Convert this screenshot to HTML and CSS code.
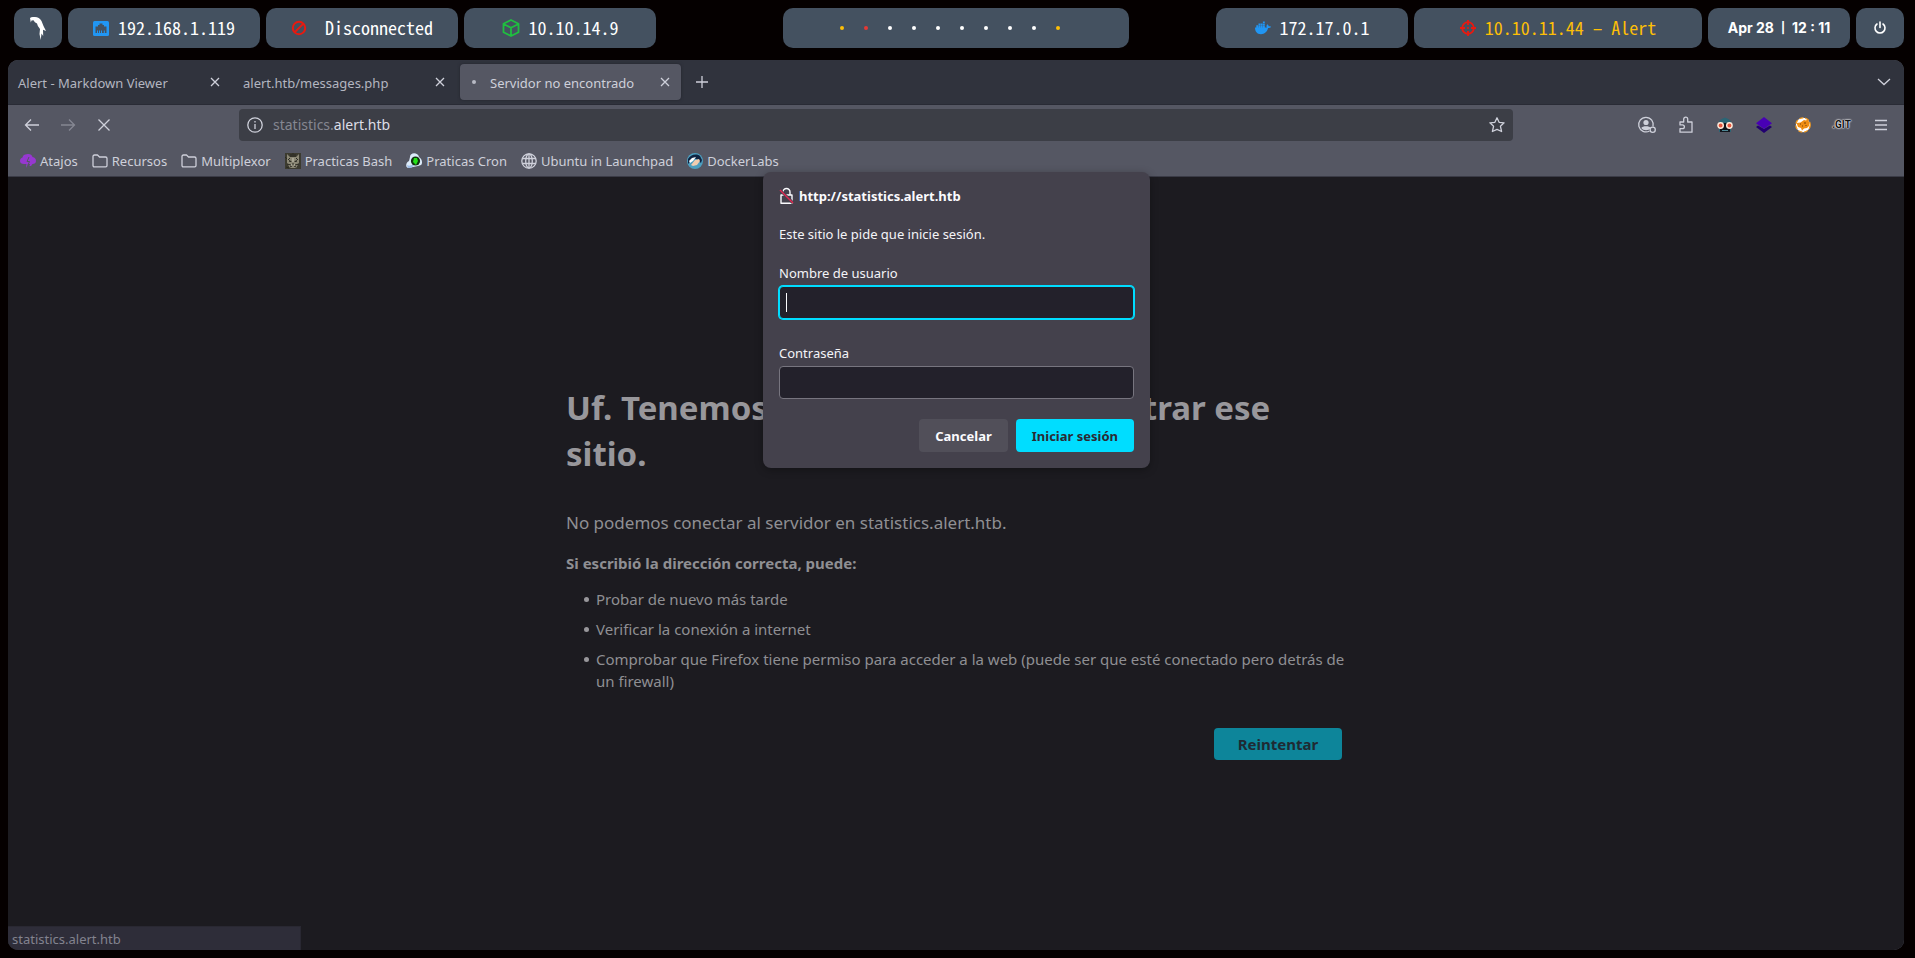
FILE: index.html
```html
<!DOCTYPE html>
<html lang="es">
<head>
<meta charset="utf-8">
<title>Servidor no encontrado</title>
<link rel="stylesheet" href="styles.css">
</head>
<body>
<header class="bar">
  <div class="bar-group bar-left">
    <button class="pill pill-icon" aria-label="Menú">
      <svg width="16" height="24" viewBox="0 0 16 24"><path fill="#fff" d="M0 2Q1.500 .500 4 1 9 .500 11.500 5L13.500 10 16 15 13 13.800 13.200 20 11.500 17.500 10.700 24 9.500 18 10 13Q7.500 10.500 7 7.500 4.500 6.500 3.500 4.200L1.500 4.500.800 6.500z"/></svg>
    </button>
    <div class="pill pill-net">
      <svg width="16" height="16" viewBox="0 0 16 16"><rect y="1" width="16" height="15" rx="1.500" fill="#2196f3"/><path fill="#445160" d="M2.500 13V6.500h2.500V5h1.500V3.500h3V5H11v1.500h2.500V13h-1.700v-2.500h-1V13H9v-2.500H8V13H7v-2.500H6V13H5v-2.500H4V13z"/></svg>
      <span>192.168.1.119</span>
    </div>
    <div class="pill pill-net pill-wide-gap">
      <svg width="16" height="16" viewBox="0 0 16 16"><g fill="none" stroke="#e9190f" stroke-width="2"><circle cx="8" cy="8" r="6.200"/><path d="M12.400 3.600l-8.800 8.800"/></g></svg>
      <span>Disconnected</span>
    </div>
    <div class="pill pill-net">
      <svg width="18" height="18" viewBox="0 0 18 18"><path fill="none" stroke="#1fbf3f" stroke-width="1.800" stroke-linejoin="round" d="M9 1l7.500 3.800v8.400L9 17l-7.500-3.800V4.800zM1.500 5L9 8.800 16.500 5M9 8.800V17"/></svg>
      <span>10.10.14.9</span>
    </div>
  </div>
  <div class="pill workspaces">
    <i class="dot yellow"></i><i class="dot red"></i><i class="dot"></i><i class="dot"></i><i class="dot"></i><i class="dot"></i><i class="dot"></i><i class="dot"></i><i class="dot"></i><i class="dot yellow"></i>
  </div>
  <div class="bar-group bar-right">
    <div class="pill pill-net">
      <svg width="16" height="16" viewBox="0 0 16 16"><path fill="#2196f3" d="M0 7.500h12c-.700-.500-.600-1.700-.200-2.500l.600-.700c.900.600 1.200 1.300 1.300 2 .700-.100 1.600 0 2.300.400-.500 1-1.700 1.300-2.900 1.300C12 12 9.500 14.200 6 14.200 2 14.200 0 11.500 0 7.500z"/><path fill="#2196f3" d="M1.300 5.300h1.900V8H1.300zM3.500 5.300h1.900V8H3.500zM5.700 5.300h1.900V8H5.700zM7.900 5.300h1.900V8H7.900zM3.500 3.400h1.900V5H3.500zM5.700 3.400h1.900V5H5.700zM7.900 3.400h1.900V5H7.900zM7.900 1.500h1.900v1.600H7.900z"/></svg>
      <span>172.17.0.1</span>
    </div>
    <div class="pill pill-target">
      <svg width="16" height="16" viewBox="0 0 16 16"><g fill="none" stroke="#e9190f" stroke-width="1.800"><circle cx="8" cy="8" r="5.800"/><path d="M8 0v5M8 11v5M0 8h5M11 8h5"/></g><circle cx="8" cy="8" r="1" fill="#e9190f"/></svg>
      <span>10.10.11.44 – Alert</span>
    </div>
    <div class="pill pill-clock"><span>Apr 28</span><span class="sep">|</span><span>12 : 11</span></div>
    <button class="pill pill-icon" aria-label="Apagar">
      <svg width="14" height="14" viewBox="0 0 14 14"><path fill="none" stroke="#fff" stroke-width="1.600" stroke-linecap="round" d="M7 1v5.500M4 3a5 5 0 1 0 6 0"/></svg>
    </button>
  </div>
</header>

<div class="window">
  <nav class="tabs" aria-label="Pestañas">
    <div class="tab"><span class="tab-title">Alert - Markdown Viewer</span><button class="icon-btn" aria-label="Cerrar"><svg width="10" height="10" viewBox="0 0 10 10"><path d="M1 1l8 8M9 1l-8 8"/></svg></button></div>
    <div class="tab"><span class="tab-title">alert.htb/messages.php</span><button class="icon-btn" aria-label="Cerrar"><svg width="10" height="10" viewBox="0 0 10 10"><path d="M1 1l8 8M9 1l-8 8"/></svg></button></div>
    <div class="tab active"><i class="busy"></i><span class="tab-title">Servidor no encontrado</span><button class="icon-btn" aria-label="Cerrar"><svg width="10" height="10" viewBox="0 0 10 10"><path d="M1 1l8 8M9 1l-8 8"/></svg></button></div>
    <button class="icon-btn new-tab" aria-label="Nueva pestaña"><svg width="14" height="14" viewBox="0 0 14 14"><path d="M7 1v12M1 7h12"/></svg></button>
    <button class="icon-btn all-tabs" aria-label="Listar pestañas"><svg width="14" height="8" viewBox="0 0 14 8"><path d="M1 1l6 5.500L13 1"/></svg></button>
  </nav>

  <div class="toolbar">
    <div class="nav-buttons">
      <button class="icon-btn" aria-label="Atrás"><svg width="16" height="16" viewBox="0 0 16 16"><path d="M15 8H1.500M7 2.500L1.500 8 7 13.500"/></svg></button>
      <button class="icon-btn dim" aria-label="Adelante" disabled><svg width="16" height="16" viewBox="0 0 16 16"><path d="M1 8h13.500M9 2.500L14.500 8 9 13.500"/></svg></button>
      <button class="icon-btn" aria-label="Detener"><svg width="16" height="16" viewBox="0 0 16 16"><path d="M2.500 2.500l11 11M13.500 2.500l-11 11"/></svg></button>
    </div>
    <div class="urlbar">
      <svg width="16" height="16" viewBox="0 0 16 16"><circle cx="8" cy="8" r="7.200"/><path d="M8 7v5M8 4v1.500"/></svg>
      <span class="url"><span class="sub">statistics.</span>alert.htb</span>
      <button class="icon-btn" aria-label="Añadir marcador"><svg width="16" height="16" viewBox="0 0 16 16"><path stroke-linejoin="round" d="M8 .800l2.100 4.500 5 .500-3.700 3.400 1.200 5.300L8 12.300l-4.600 2.200 1.200-5.300L.900 5.800l5-.500z"/></svg></button>
    </div>
    <div class="extensions">
      <button class="icon-btn" aria-label="Cuenta"><svg width="20" height="18" viewBox="0 0 20 18"><path d="M12.500 15A7.300 7.300 0 1 1 16 10.500"/><circle cx="9" cy="6.500" r="2.600" fill="#ced0da" stroke="none"/><path fill="#ced0da" stroke="none" d="M4.300 12c1-2.300 8.400-2.300 9.400 0-2 3-7.400 3-9.400 0z"/><circle cx="15.700" cy="13.700" r="2.600"/></svg></button>
      <button class="icon-btn" aria-label="Extensiones"><svg width="16" height="18" viewBox="0 0 16 18"><path stroke-linejoin="round" d="M2 6h3.700V3.200a2 2 0 0 1 4 0V6H14v10.200H2v-3.500h2.500a1.900 1.900 0 0 0 0-3.800H2z"/></svg></button>
      <button class="icon-btn" aria-label="Wappalyzer"><svg width="16" height="16" viewBox="0 0 16 16"><path fill="#2b6575" stroke="none" d="M1.500 7C1.500 3 5 1.500 8 .500c3 1 6.500 2.500 6.500 6.500z"/><path fill="#2b6575" stroke="none" d="M2 10h12v5H2z"/><path fill="#12161d" stroke="none" d="M5 6h6v4l2 2v3H3v-3l2-2z"/><path fill="#4d8795" stroke="none" d="M5 13h6v1H5z"/><g fill="#e5573f" stroke="#ffe9d8" stroke-width="1.400"><circle cx="3.600" cy="8.500" r="2.700"/><circle cx="12.400" cy="8.500" r="2.700"/></g></svg></button>
      <button class="icon-btn" aria-label="Capas"><svg width="16" height="16" viewBox="0 0 16 16"><path fill="#220070" stroke="none" d="M0 10l2-1.500L8 12l6-3.500L16 10l-8 6z"/><path fill="#4800b5" stroke="none" d="M8 0l8 6.200L8 12 0 6.200z"/></svg></button>
      <button class="icon-btn" aria-label="Cookies"><svg width="16" height="16" viewBox="0 0 16 16"><circle cx="8" cy="8" r="7.200" fill="#fff" stroke="#f39a1e" stroke-width="1.300" stroke-dasharray="4 2"/><path fill="#ef8e14" stroke="none" d="M1.500 6l4-.500L9 3l2 .500L13 2l1 3v4l-2 2-3 .500-2 2-1-2.500-3-1z"/><path stroke="#7a4307" stroke-width="1" d="M5 7h1M9 6h2M7 9h1M11 8v1"/></svg></button>
      <button class="icon-btn git" aria-label="DotGit">.GIT</button>
      <button class="icon-btn" aria-label="Menú de la aplicación"><svg width="14" height="14" viewBox="0 0 14 14"><path d="M1 2.500h12M1 7h12M1 11.500h12"/></svg></button>
    </div>
  </div>

  <nav class="bookmarks" aria-label="Marcadores">
    <a href="#"><svg width="16" height="16" viewBox="0 0 16 16"><path fill="#9638d0" stroke="none" d="M0 8c0-2 1-3 2.500-3.500C3 2 5 1 7 1.200c3-.400 5 .800 5.500 2.800C15 4.500 16 6 16 8c0 2-1.500 3-3.500 3L11 13H9.500l.500-2H8l-2 4 .500-4H4C1.500 11 0 10 0 8z"/><path stroke="#555763" stroke-width="1" d="M9 4L7 8.500h2.500L8 12"/></svg>Atajos</a>
    <a href="#"><svg width="16" height="16" viewBox="0 0 16 16"><path stroke-linejoin="round" d="M1 12.500v-9c0-1 .500-1.500 1.500-1.500h3L7.500 4h6c1 0 1.500.500 1.500 1.500v7c0 .800-.500 1.300-1.300 1.300H2.300C1.500 13.800 1 13.300 1 12.500z"/></svg>Recursos</a>
    <a href="#"><svg width="16" height="16" viewBox="0 0 16 16"><path stroke-linejoin="round" d="M1 12.500v-9c0-1 .500-1.500 1.500-1.500h3L7.500 4h6c1 0 1.500.500 1.500 1.500v7c0 .800-.500 1.300-1.300 1.300H2.300C1.500 13.800 1 13.300 1 12.500z"/></svg>Multiplexor</a>
    <a href="#"><svg width="16" height="16" viewBox="0 0 16 16"><path fill="#3c3b30" stroke="none" d="M0 0h16v16H0z"/><path fill="#8a8775" stroke="none" d="M2 1l3 3h6l3-3v9l-3 5H5l-3-5z"/><path stroke="#2b2a22" stroke-width="1" d="M6 1v3M8 0v4M10 1v3M2 11l4 1M10 12l4-1M0 4l2 2M1 14l3 1M3 7l2-2M13 7l-2-2M5 14l2-1M11 14l-2-1"/><path fill="#171711" stroke="none" d="M4 7l3 1.500-2.500.500zM12 7L9 8.500l2.500.500zM7 10.500h2L8 12z"/><path stroke="#c6c4b4" stroke-width="1" d="M6 12h1M9 12h1M8 5v4"/></svg>Practicas Bash</a>
    <a href="#"><svg width="16" height="16" viewBox="0 0 16 16"><path fill="#dcebfa" stroke="none" d="M4 4c0-5 8-5 9 0 3 2 4 6 2 8l-3 1-5 1-5 1c-3-1-2-6 1-7z"/><path fill="#9dbde8" stroke="none" d="M1 12c3 2 5-1 7 0l-2 2.500-4 .500z"/><circle cx="9.500" cy="8" r="4.600" fill="#12330f" stroke="none"/><path fill="#24e018" stroke="none" d="M8 5h3l1 3-2 4-3-3z"/></svg>Praticas Cron</a>
    <a href="#"><svg width="16" height="16" viewBox="0 0 16 16"><circle cx="8" cy="8" r="7.200"/><ellipse cx="8" cy="8" rx="3.300" ry="7.200"/><path d="M1.500 5.500h13M1.500 10.500h13M8 1v14"/></svg>Ubuntu in Launchpad</a>
    <a href="#"><svg width="16" height="16" viewBox="0 0 16 16"><circle cx="8" cy="8" r="8" fill="#4c9fc0" stroke="none"/><path fill="#0f2442" stroke="none" d="M1 6c2-4 8-6 12-3l2 4-1 3-3-3-4-2-4 4-2 2z"/><path fill="#f1cdb0" stroke="none" d="M4 12l4-5 4-1 1 2-3 4-4 1z"/><path fill="#fff" stroke="none" d="M2 8l3-3 4-1-3 4-3 2z"/></svg>DockerLabs</a>
  </nav>

  <main class="content">
    <section class="error">
      <h1>Uf. Tenemos problemas para encontrar ese sitio.</h1>
      <p class="lead">No podemos conectar al servidor en statistics.alert.htb.</p>
      <p class="hint">Si escribió la dirección correcta, puede:</p>
      <ul>
        <li>Probar de nuevo más tarde</li>
        <li>Verificar la conexión a internet</li>
        <li>Comprobar que Firefox tiene permiso para acceder a la web (puede ser que esté conectado pero detrás de un firewall)</li>
      </ul>
      <button class="retry">Reintentar</button>
    </section>
    <div class="status">statistics.alert.htb</div>
  </main>

  <form class="auth" role="dialog" aria-labelledby="auth-title">
    <h2 id="auth-title"><svg width="16" height="18" viewBox="0 0 16 18"><path fill="none" stroke="#fbfbfe" stroke-width="1.400" stroke-linejoin="round" d="M2 8h11v8.300H2zM4 8V5a3.500 3.500 0 0 1 7 0v3"/><path stroke="#44414c" stroke-width="3" d="M1 3l13 13"/><path stroke="#e22850" stroke-width="1.400" d="M1 3l13 13"/></svg>http://statistics.alert.htb</h2>
    <p>Este sitio le pide que inicie sesión.</p>
    <div class="field focused">
      <label for="user">Nombre de usuario</label>
      <input id="user" type="text">
    </div>
    <div class="field">
      <label for="pass">Contraseña</label>
      <input id="pass" type="password">
    </div>
    <div class="actions">
      <button type="button">Cancelar</button>
      <button type="submit" class="primary">Iniciar sesión</button>
    </div>
  </form>
</div>
</body>
</html>
```
FILE: styles.css
```css
* { box-sizing: border-box; }

body {
  margin: 0;
  min-height: 100vh;
  padding: 8px 11px 8px 8px;
  display: flex;
  flex-direction: column;
  gap: 12px;
  background: #050000;
  color: #ced0da;
  font: 13px/20px "Noto Sans", sans-serif;
}

button { font: inherit; color: inherit; border: 0; padding: 0; background: none; }

/* Desktop bar */
.bar { display: grid; grid-template-columns: 1fr auto 1fr; }
.bar-group { display: flex; gap: 6px; }
.bar-left { padding-left: 6px; }
.bar-right { justify-content: flex-end; }
.pill {
  height: 40px;
  border-radius: 10px;
  background: #445160;
  color: #fff;
  display: flex;
  align-items: center;
  justify-content: center;
  gap: 9px;
  font: 18px/24px "Noto Sans Mono CJK SC", "Noto Sans CJK SC", monospace;
}
.pill-icon { width: 48px; }
.pill-net { width: 192px; }
.pill-net span, .pill-target span { padding-bottom: 2px; }
.pill-wide-gap { gap: 18px; }
.pill-target { width: 288px; color: #fdbf06; }
.pill-clock { width: 142px; gap: 7px; font: bold 14px/20px Inter, sans-serif; }
.sep { font-size: 11px; }
.workspaces { width: 346px; gap: 20px; padding-right: 12px; }
.dot { width: 4px; height: 4px; border-radius: 2px; background: #fff; }
.yellow { background: #fdbf06; }
.red { background: #e53935; }

/* Browser window */
.window {
  flex: 1;
  position: relative;
  display: flex;
  flex-direction: column;
  border-radius: 10px;
  overflow: hidden;
  background: #555763;
}
.window svg { flex: none; fill: none; stroke: #ced0da; stroke-width: 1.3; }
.icon-btn { display: flex; align-items: center; justify-content: center; }

.tabs { height: 45px; display: flex; background: #30333d; border-bottom: 1px solid #292b35; padding: 4px 0; }
.tab { width: 225px; height: 36px; display: flex; align-items: center; padding: 0 13px 0 10px; color: #b3b6c0; }
.tab-title { flex: 1; padding-top: 2px; }
.tab.active { width: 221px; margin-left: 2px; padding: 0 11px; border-radius: 4px; background: #555763; color: #ced0da; box-shadow: 0 0 3px #22242c; }
.busy { width: 4px; height: 4px; border-radius: 2px; margin: 0 14px 0 1px; background: #b8bac4; }
.new-tab { margin-left: 14px; }
.all-tabs { margin-left: auto; margin-right: 13px; }

.toolbar { display: flex; align-items: center; height: 40px; padding: 0 4px 0 16px; }
.nav-buttons { display: flex; gap: 20px; width: 215px; }
.dim { opacity: .4; }
.urlbar { flex: 1; height: 32px; margin-right: 114px; padding: 0 8px; display: flex; align-items: center; gap: 10px; border-radius: 4px; background: #3c3e46; color: #dcdde6; font-size: 14px; }
.url { flex: 1; }
.sub { color: #858791; }
.extensions { display: flex; }
.extensions .icon-btn { width: 39px; }
.git { font: bold 10px/16px Roboto, sans-serif; color: #111; text-shadow: 0 0 2px #fff, 0 0 2px #fff, 0 0 1px #fff; }

.bookmarks { display: flex; gap: 14px; height: 32px; padding: 1px 12px 0; align-items: center; border-bottom: 1px solid #3a3b46; }
.bookmarks a { display: flex; align-items: center; gap: 4px; color: inherit; text-decoration: none; }

/* Error page */
.content { flex: 1; position: relative; background: #1c1b20; color: #8f8f93; }
.error { width: 780px; max-width: 100%; margin: 0 auto; padding-top: 208px; font-size: 15px; line-height: 22px; display: flex; flex-direction: column; }
.error h1 { margin: 0 0 33px; font-size: 33px; line-height: 46px; color: #98979b; }
.error p { margin: 0; }
.error .lead { font-size: 17px; line-height: 26px; margin-bottom: 16px; }
.error .hint { font-weight: bold; margin-bottom: 14px; }
.error ul { margin: 0; padding-left: 18px; display: flex; flex-direction: column; gap: 8px; }
.error li { display: flex; gap: 7px; }
.error li::before { content: ""; flex: none; width: 5px; height: 5px; margin-top: 9px; border-radius: 50%; background: #98979b; }
.retry { align-self: flex-end; width: 128px; height: 32px; margin: 36px 4px 0 0; border-radius: 4px; background: #0d859a; color: #1f2a33; font-weight: bold; }
.status { position: absolute; left: 0; bottom: 0; width: 293px; height: 24px; padding-left: 4px; line-height: 24px; background: #2e2d39; border-top: 1px solid #292832; border-right: 1px solid #292832; color: #83838f; }

/* Sign-in prompt */
.auth {
  position: absolute;
  top: 112px;
  left: 50%;
  width: 387px;
  margin-left: -193px;
  padding: 14px 16px 16px;
  display: flex;
  flex-direction: column;
  border-radius: 8px;
  background: #44414c;
  color: #f4f4f8;
  box-shadow: 0 2px 8px rgba(0, 0, 0, .3);
}
.auth h2 { margin: 0; font-size: 13px; line-height: 20px; display: flex; gap: 4px; align-items: center; color: #fbfbfe; }
.auth p { margin: 18px 0 19px; }
.field { position: relative; display: flex; flex-direction: column; gap: 3px; margin-bottom: 24px; }
.field + .field { margin-bottom: 20px; }
.field input { height: 33px; padding: 0 6px; border: 1px solid #77757f; border-radius: 4px; outline: 0; background: #23212b; color: #fbfbfe; font: inherit; }
.focused input { border-color: #00ddff; box-shadow: 0 0 0 1px #00ddff; caret-color: transparent; }
.focused::after { content: ""; position: absolute; left: 7px; bottom: 7px; width: 1px; height: 19px; background: #fbfbfe; }
.actions { display: flex; justify-content: flex-end; gap: 8px; }
.actions button { height: 33px; padding: 0 16px; border-radius: 4px; background: #514f59; color: #fbfbfe; font-weight: bold; }
.actions .primary { background: #00ddff; color: #2b2a33; }
```
